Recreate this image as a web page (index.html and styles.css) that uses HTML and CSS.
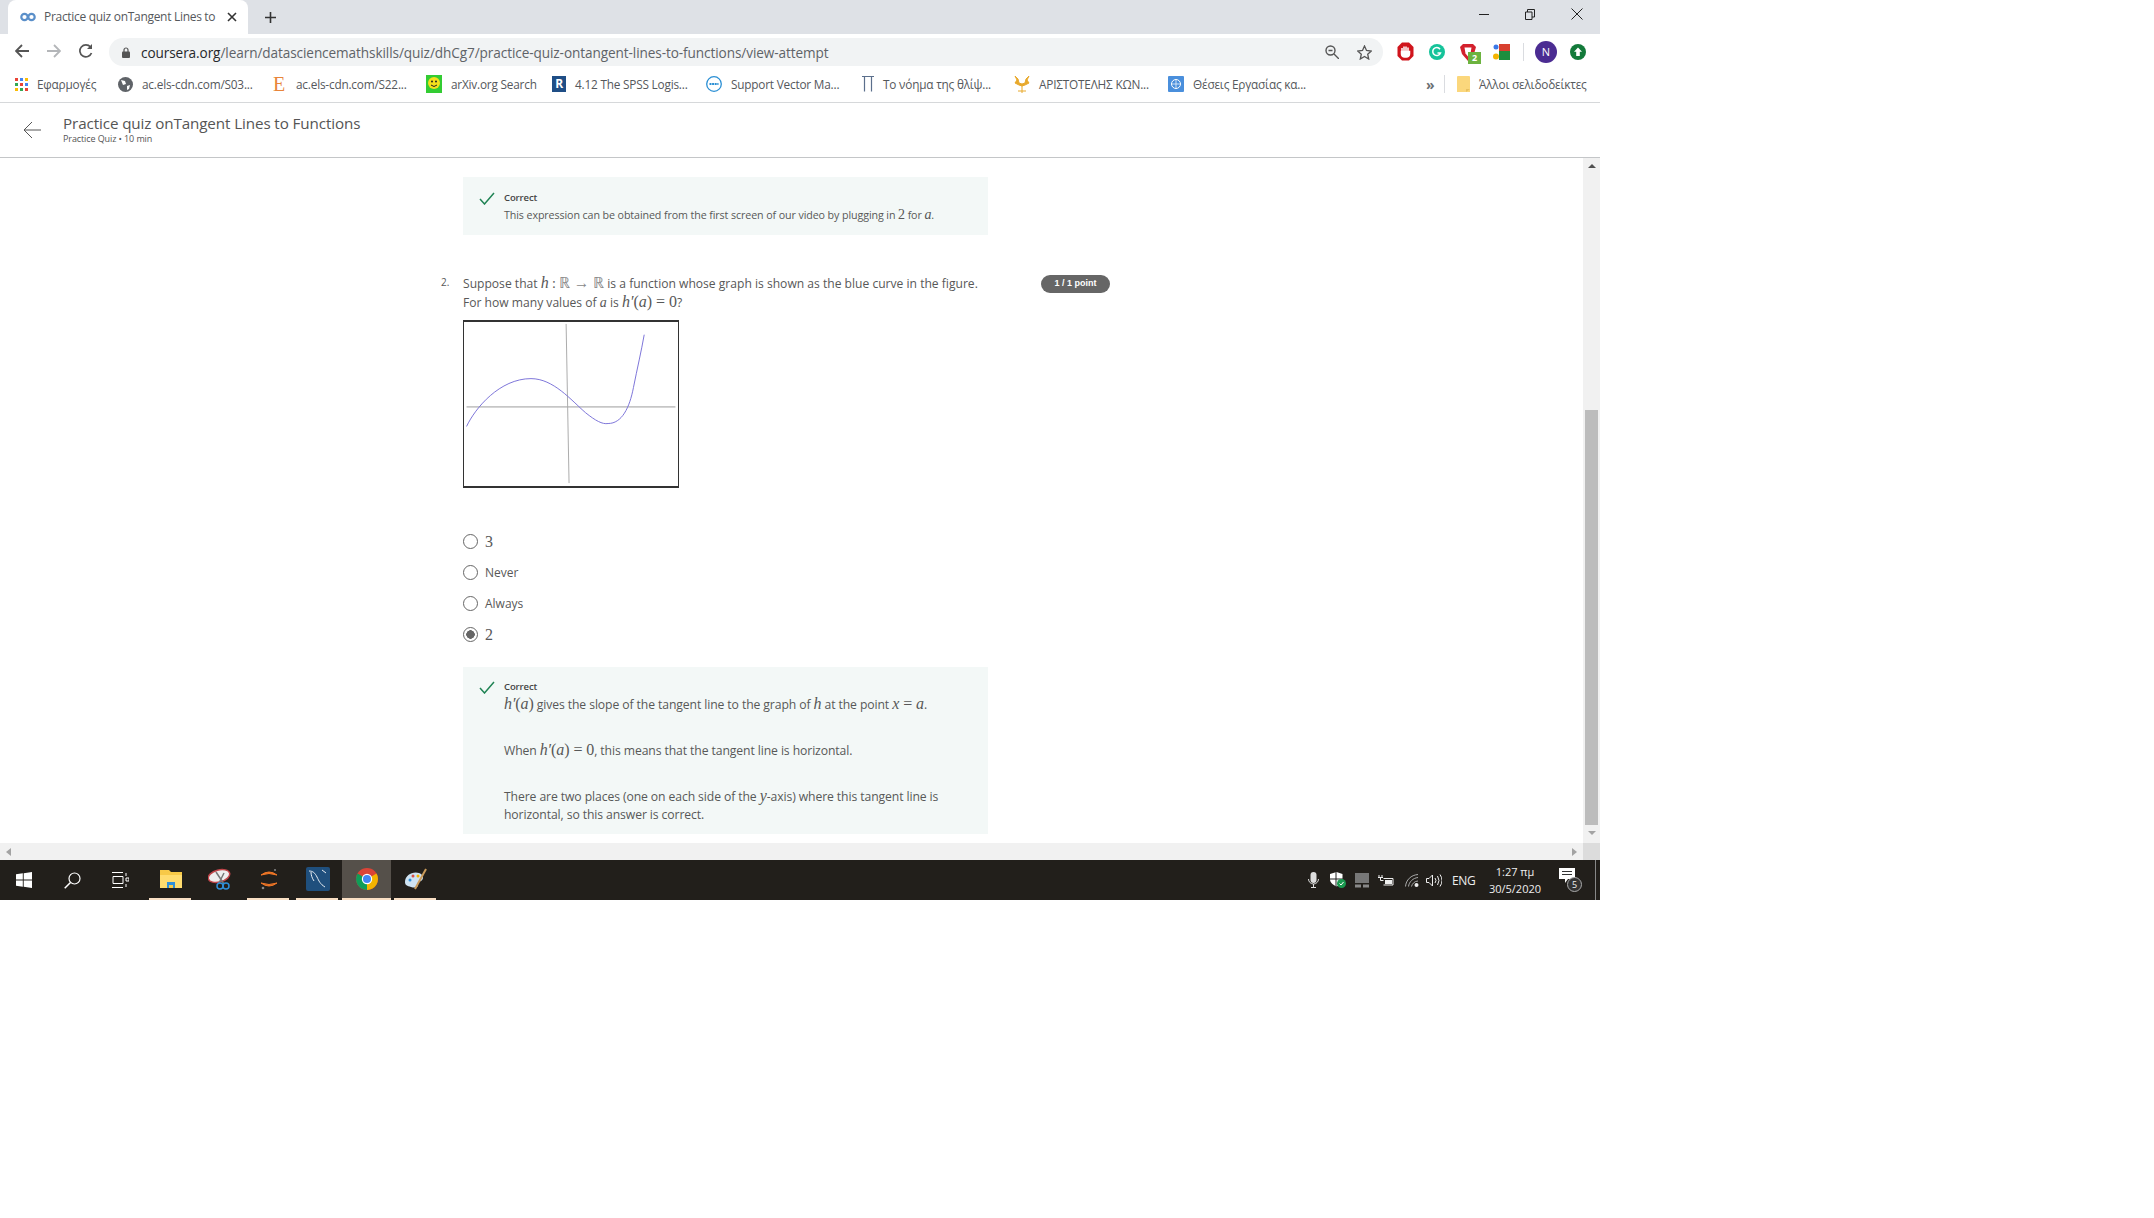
FILE: index.html
```html
<!DOCTYPE html>
<html lang="en">

<head>
    <meta charset="UTF-8">
    <title>Practice quiz onTangent Lines to Functions</title>
    <link rel="stylesheet" href="styles.css">
</head>

<body>
    <div class="window">
        <!-- tab strip -->
        <div class="tab-strip">
            <div class="tab">
                <svg class="tab-icon" width="16" height="10" viewBox="0 0 16 10"><circle cx="4.500" cy="5" r="3.200" fill="none" stroke="#5a8fc9" stroke-width="2.200"/><circle cx="11.500" cy="5" r="3.200" fill="none" stroke="#5a8fc9" stroke-width="2.200"/></svg>
                <span class="tab-title">Practice quiz onTangent Lines to</span>
                <svg width="10" height="10" viewBox="0 0 10 10"><path d="M1 1l8 8M9 1l-8 8" stroke="#333" stroke-width="1.600"/></svg>
            </div>
            <svg class="new-tab" width="11" height="11" viewBox="0 0 11 11"><path d="M5.500 0v11M0 5.500h11" stroke="#333" stroke-width="1.600"/></svg>
            <div class="win-controls">
                <svg width="10" height="10" viewBox="0 0 10 10"><path d="M0 5.500h10" stroke="#222"/></svg>
                <svg width="10" height="11" viewBox="0 0 10 11"><path d="M.5 3h6.500v7.500h-6.500zM2.500 3V.5h7v7.500H7" fill="none" stroke="#222"/></svg>
                <svg width="12" height="12" viewBox="0 0 12 12"><path d="M.5.5l11 11M11.500.5l-11 11" stroke="#222"/></svg>
            </div>
        </div>

        <!-- address bar -->
        <div class="toolbar">
            <div class="nav-buttons">
                <svg width="14" height="14" viewBox="0 0 14 14"><path d="M14 7H1.500M7 1L1 7l6 6" fill="none" stroke="#555" stroke-width="1.800"/></svg>
                <svg width="14" height="14" viewBox="0 0 14 14"><path d="M0 7h12.500M7 1l6 6-6 6" fill="none" stroke="#b4b6b9" stroke-width="1.800"/></svg>
                <svg width="14" height="14" viewBox="0 0 14 14"><path d="M12.500 9A6 6 0 1 1 11.500 3" fill="none" stroke="#555" stroke-width="1.700"/><path d="M13 0v5H8z" fill="#555"/></svg>
            </div>
            <div class="omnibox">
                <svg width="8" height="11" viewBox="0 0 8 11"><path d="M2 5V3a2 2 0 0 1 4 0v2" fill="none" stroke="#555" stroke-width="1.200"/><rect y="4.500" width="8" height="6.500" rx="1" fill="#555"/></svg>
                <span class="url"><b>coursera.org</b>/learn/datasciencemathskills/quiz/dhCg7/practice-quiz-ontangent-lines-to-functions/view-attempt</span>
                <svg class="omni-zoom" width="14" height="14" viewBox="0 0 14 14"><circle cx="5.500" cy="5.500" r="4.500" fill="none" stroke="#555" stroke-width="1.400"/><path d="M9 9l5 5M3.500 5.500h4" stroke="#555" stroke-width="1.400"/></svg>
                <svg width="15" height="15" viewBox="0 0 15 15"><path d="M7.500 1l2 4.500 4.800.5-3.600 3.200 1 4.800-4.200-2.500L3.300 14l1-4.800L.700 6l4.800-.5z" fill="none" stroke="#555" stroke-width="1.300"/></svg>
            </div>
            <div class="extensions">
                <svg width="17" height="19" viewBox="0 0 17 19"><path d="M5 .5h7L16.500 5v9L12 18.500H5L.5 14V5z" fill="#d0141c"/><path d="M4.500 9.500h8v2.500a3 3 0 0 1-3 3h-2a3 3 0 0 1-3-3zM5 10V6M7 10V4.500M9 10V4.500M11 10V5.500" stroke="#fff" stroke-width="1.500" fill="#fff"/></svg>
                <svg width="16" height="16" viewBox="0 0 16 16"><circle cx="8" cy="8" r="8" fill="#15c39a"/><path d="M11 5.200A4 4 0 1 0 11.500 9H8.500" fill="none" stroke="#fff" stroke-width="1.500"/></svg>
                <span class="ext-badge-wrap">
                    <svg width="16" height="18" viewBox="0 0 16 18"><path d="M3 1h10l3 3-2 7-6 7-6-7-2-7z" fill="#d3212d"/><path d="M4.500 4.500h7l-1 6L8 13.500 5.500 10.500z" fill="#fff"/></svg>
                    <span class="ext-badge">2</span>
                </span>
                <svg width="17" height="16" viewBox="0 0 17 16"><rect x="6" width="11" height="7" fill="#d8402f"/><rect x="6" y="7" width="11" height="9" fill="#1e8e3e"/><rect width="6" height="9" fill="#fff"/><circle cx="3" cy="3" r="2.500" fill="#3b78e7"/><circle cx="3" cy="12.500" r="3" fill="#f4b400"/></svg>
                <span class="ext-sep"></span>
                <span class="avatar">N</span>
                <svg width="16" height="16" viewBox="0 0 16 16"><circle cx="8" cy="8" r="8" fill="#137a3a"/><path d="M8 3.500l4 4.200H9.800v4.300H6.200V7.700H4z" fill="#fff"/></svg>
            </div>
        </div>

        <!-- bookmarks -->
        <div class="bookmarks">
            <a class="bookmark bm-apps">
                <svg width="13" height="13" viewBox="0 0 13 13"><path d="M0 0h3v3H0z" fill="#ea4335"/><path d="M5 0h3v3H5z" fill="#4285f4"/><path d="M10 0h3v3h-3z" fill="#fbbc05"/><path d="M0 5h3v3H0z" fill="#34a853"/><path d="M5 5h3v3H5z" fill="#ea4335"/><path d="M10 5h3v3h-3z" fill="#4285f4"/><path d="M0 10h3v3H0z" fill="#fbbc05"/><path d="M5 10h3v3H5z" fill="#34a853"/><path d="M10 10h3v3h-3z" fill="#ea4335"/></svg>
                Εφαρμογές
            </a>
            <a class="bookmark bm-els">
                <svg width="15" height="15" viewBox="0 0 15 15"><circle cx="7.500" cy="7.500" r="7.500" fill="#5f6368"/><path d="M3 3l4 1 1 3-3 1zM9 9l3-1-1 4-2 1z" fill="#fff"/></svg>
                ac.els-cdn.com/S03...
            </a>
            <a class="bookmark bm-els2">
                <span class="icon-e">E</span>
                ac.els-cdn.com/S22...
            </a>
            <a class="bookmark bm-arxiv">
                <svg width="16" height="18" viewBox="0 0 16 18"><rect width="16" height="18" fill="#33cc33"/><circle cx="8" cy="8" r="6" fill="#f4e01c"/><circle cx="6" cy="6.500" r="1" fill="#222"/><circle cx="10" cy="6.500" r="1" fill="#222"/><path d="M5 10q3 3 6 0" fill="none" stroke="#222"/></svg>
                arXiv.org Search
            </a>
            <a class="bookmark bm-spss">
                <span class="icon-r">R</span>
                4.12 The SPSS Logis...
            </a>
            <a class="bookmark bm-dell">
                <svg width="16" height="16" viewBox="0 0 16 16"><circle cx="8" cy="8" r="7.300" fill="#fff" stroke="#2a8fd4" stroke-width="1.300"/><path d="M3.500 8h9" stroke="#2a8fd4" stroke-width="2.200" stroke-dasharray="2 .6"/></svg>
                Support Vector Ma...
            </a>
            <a class="bookmark bm-pi">
                <svg width="12" height="16" viewBox="0 0 12 16"><path d="M0 .5h12M2.500.5v15M9.500.5v15" fill="none" stroke="#5b6f8c" stroke-width="1.200"/></svg>
                Το νόημα της θλίψ...
            </a>
            <a class="bookmark bm-arist">
                <svg width="16" height="17" viewBox="0 0 16 17"><path d="M8 17V9M4 15h8M1 0l2 4-2 3 4 2 3 1 3-1 4-2-2-3 2-4-3 3-1 4-3 1-3-1-1-4z" fill="#e8a92c" stroke="#e8a92c"/></svg>
                ΑΡΙΣΤΟΤΕΛΗΣ ΚΩΝ...
            </a>
            <a class="bookmark bm-un">
                <svg width="16" height="16" viewBox="0 0 16 16"><rect width="16" height="16" rx="1" fill="#4a8fdc"/><circle cx="8" cy="8" r="4.500" fill="none" stroke="#fff"/><path d="M8 3.500v9M3.500 8h9" stroke="#fff" stroke-width=".7"/></svg>
                Θέσεις Εργασίας κα...
            </a>
            <span class="bm-more">»</span>
            <span class="bm-sep"></span>
            <a class="bookmark bm-other">
                <svg width="13" height="16" viewBox="0 0 13 16"><path d="M0 1a1 1 0 0 1 1-1h11a1 1 0 0 1 1 1v15H0z" fill="#fbd77c"/><path d="M9 16v-3h4" fill="#e8c060"/></svg>
                Άλλοι σελιδοδείκτες
            </a>
        </div>

        <!-- page header -->
        <div class="page-header">
            <svg class="back-arrow" width="18" height="18" viewBox="0 0 18 18"><path d="M18 9H1M9 1L1 9l8 8" fill="none" stroke="#555" stroke-width="1"/></svg>
            <div class="page-heading">
                <div class="page-title">Practice quiz onTangent Lines to Functions</div>
                <div class="page-sub">Practice Quiz • 10 min</div>
            </div>
        </div>

        <!-- quiz -->
        <div class="viewport">
            <div class="content">
                <div class="quiz">
                    <div class="feedback feedback-first">
                        <svg class="check" width="16" height="13" viewBox="0 0 16 13"><path d="M1 7l4.500 5L15 1" fill="none" stroke="#1f8354" stroke-width="1.500"/></svg>
                        <div>
                            <div class="feedback-label">Correct</div>
                            <p>This expression can be obtained from the first screen of our video by plugging in <span class="num">2</span> for <i class="math">a</i>.</p>
                        </div>
                    </div>

                    <div class="question">
                        <span class="question-num">2.</span>
                        <div class="question-body">
                            <p>Suppose that <i class="math big">h</i> <span class="num">:</span> <span class="num soft">ℝ → ℝ</span> is a function whose graph is shown as the blue curve in the figure.</p>
                            <p>For how many values of <i class="math">a</i> is <i class="math big">h′</i><span class="num big">(</span><i class="math big">a</i><span class="num big">)</span><span class="num big rel">=</span><span class="num big">0</span>?</p>
                        </div>
                        <span class="points">1 / 1 point</span>
                    </div>

                    <svg class="figure" width="216" height="168" viewBox="0 0 216 168">
                        <path d="M1 87h214" stroke="#999" fill="none"/>
                        <path d="M103 2l3 163" stroke="#aaa" fill="none"/>
                        <path d="M1 107C10 88 35 58 67 58c23 0 41 22 56 35 10 8 17 12 23 11 14 0 22-16 26-37 4-20 8-37 11-54" fill="none" stroke="#7a72d8"/>
                    </svg>

                    <div class="options">
                        <div class="option"><span class="radio"></span><span class="num big">3</span></div>
                        <div class="option"><span class="radio"></span>Never</div>
                        <div class="option"><span class="radio"></span>Always</div>
                        <div class="option"><span class="radio checked"></span><span class="num big">2</span></div>
                    </div>

                    <div class="feedback feedback-second">
                        <svg class="check" width="16" height="13" viewBox="0 0 16 13"><path d="M1 7l4.500 5L15 1" fill="none" stroke="#1f8354" stroke-width="1.500"/></svg>
                        <div>
                            <div class="feedback-label">Correct</div>
                            <p><i class="math big">h′</i><span class="num big">(</span><i class="math big">a</i><span class="num big">)</span> gives the slope of the tangent line to the graph of <i class="math big">h</i> at the point <i class="math big">x</i><span class="num big rel">=</span><i class="math big">a</i>.</p>
                            <p class="para">When <i class="math big">h′</i><span class="num big">(</span><i class="math big">a</i><span class="num big">)</span><span class="num big rel">=</span><span class="num big">0</span>, this means that the tangent line is horizontal.</p>
                            <p class="para">There are two places (one on each side of the <i class="math big">y</i>-axis) where this tangent line is<br>horizontal, so this answer is correct.</p>
                        </div>
                    </div>
                </div>
                <div class="h-scroll">
                    <span class="arrow-left"></span>
                    <span class="arrow-right"></span>
                </div>
            </div>
            <div class="v-scroll">
                <span class="arrow-up"></span>
                <span class="v-thumb"></span>
                <span class="arrow-down"></span>
                <span class="corner"></span>
            </div>
        </div>

        <!-- windows taskbar -->
        <div class="taskbar">
            <div class="task-start">
                <span class="task-btn"><svg width="16" height="16" viewBox="0 0 16 16"><path d="M0 2.300l6.800-1v6.200H0zM7.700 1.200L16 0v7.500H7.700zM0 8.500h6.800v6.200l-6.800-1zM7.700 8.500H16V16l-8.300-1.200z" fill="#fff"/></svg></span>
                <span class="task-btn"><svg width="17" height="17" viewBox="0 0 17 17"><circle cx="10.500" cy="6.500" r="5.500" fill="none" stroke="#fff" stroke-width="1.200"/><path d="M6.500 10.500L.7 16.300" stroke="#fff" stroke-width="1.500"/></svg></span>
                <span class="task-btn"><svg width="17" height="16" viewBox="0 0 17 16"><path d="M0 .5h11M0 15.500h11M1 4.500h10v7H1zM14 1v3M14 6h3v3h-3zM14 12v3" fill="none" stroke="#fff"/></svg></span>
            </div>
            <div class="task-apps">
                <span class="task-app running"><svg width="22" height="18" viewBox="0 0 22 18"><path d="M0 0h9l2 2h11v16H0z" fill="#f7c948"/><path d="M0 5h22v13H0z" fill="#ffdc6f"/><path d="M7 18v-6h8v6" fill="#2f8fd8"/><path d="M9 18v-3h4v3" fill="#f7c948"/></svg></span>
                <span class="task-app"><svg width="24" height="22" viewBox="0 0 24 22"><ellipse cx="11" cy="8" rx="11" ry="6" transform="rotate(-15 11 8)" fill="#eee" stroke="#c0454a" stroke-width="1.500"/><path d="M8 4l8 12M16 5L11 15" stroke="#777" stroke-width="1.500"/><circle cx="18" cy="18" r="3" fill="none" stroke="#2f8fd8" stroke-width="1.500"/><circle cx="12" cy="18" r="3" fill="none" stroke="#2f8fd8" stroke-width="1.500"/></svg></span>
                <span class="task-app running"><svg width="18" height="22" viewBox="0 0 18 22"><path d="M1 7q8-6 16 0q-8-3-16 0zM1 15q8 6 16 0q-8 3-16 0z" fill="#f37726" stroke="#f37726"/><circle cx="15" cy="2" r="1" fill="#888"/><circle cx="3" cy="20" r="1.300" fill="#888"/></svg></span>
                <span class="task-app running"><svg width="24" height="24" viewBox="0 0 24 24"><rect width="24" height="24" rx="2" fill="#1f4f7d"/><path d="M3 4c4 0 6 2 8 6s3 7 8 10M5 5c0 3 1 6 3 9M16 3l4 3" fill="none" stroke="#e8eef4"/></svg></span>
                <span class="task-app active running"><svg width="22" height="22" viewBox="0 0 22 22"><circle cx="11" cy="11" r="11" fill="#db4437"/><path d="M11 11L1.500 5.500A11 11 0 0 0 11 22z" fill="#0f9d58"/><path d="M11 11v11A11 11 0 0 0 20.500 5.500z" fill="#f4b400"/><circle cx="11" cy="11" r="5.200" fill="#fff"/><circle cx="11" cy="11" r="4" fill="#4285f4"/></svg></span>
                <span class="task-app running"><svg width="24" height="24" viewBox="0 0 24 24"><path d="M1 15c0-7 8-11 14-9 5 2 5 6 2 8-3 1-4 2-3 4 0 3-4 3-7 2-4-1-6-2-6-5z" fill="#cfe3f2"/><circle cx="6" cy="13" r="1.500" fill="#2f8fd8"/><circle cx="9" cy="9" r="1.500" fill="#d8504a"/><circle cx="14" cy="9" r="1.500" fill="#f4b400"/><path d="M11 22L22 2" stroke="#c99a5a" stroke-width="2"/></svg></span>
            </div>
            <div class="tray">
                <svg class="tray-mic" width="11" height="16" viewBox="0 0 11 16"><rect x="2.500" width="6" height="11" rx="3" fill="#ddd"/><path d="M.5 7a5 5 0 0 0 10 0M5.500 12v4M3 15.500h5" fill="none" stroke="#ddd"/></svg>
                <svg class="tray-shield" width="16" height="16" viewBox="0 0 16 16"><path d="M6.500 0l6 2v5c0 4-3 6-6 7.500C3.500 13 0 11 0 7V2z" fill="#fff"/><path d="M6 0v15M0 7h13" stroke="#222"/><circle cx="11.500" cy="11.500" r="4.500" fill="#1a9a50"/><path d="M9.500 11.500l1.500 1.500 2.500-3" fill="none" stroke="#fff"/></svg>
                <svg class="tray-device" width="14" height="15" viewBox="0 0 14 15"><rect width="14" height="10" fill="#777"/><rect y="11.500" width="6" height="3" fill="#888"/><rect x="8" y="11.500" width="6" height="3" fill="#888"/></svg>
                <svg class="tray-battery" width="16" height="11" viewBox="0 0 16 11"><path d="M1 0v2M4 0v2M0 2.500h5M2.500 2.500v3h3M5.500 3.500h9.500v6.500H5.500" fill="none" stroke="#eee"/><rect x="7" y="5" width="7" height="4" fill="#eee"/></svg>
                <svg class="tray-wifi" width="14" height="13" viewBox="0 0 14 13"><path d="M.5 12.500C1 6 6 1 13 .5M3.500 12.500C4 8 8 4 13 3.500M6.500 12.500C7 10 9.500 7 13 7" fill="none" stroke="#aaa"/><circle cx="11.500" cy="11" r="2" fill="#eee"/></svg>
                <svg class="tray-sound" width="16" height="13" viewBox="0 0 16 13"><path d="M.5 4.500h2.500L6.500 1v11L3 8.500H.5z" fill="none" stroke="#eee"/><path d="M9 4q2 2.500 0 5M11.500 2q3 4.500 0 9M14 .5q4 6 0 12" fill="none" stroke="#eee"/></svg>
                <span class="tray-lang">ENG</span>
                <div class="tray-clock">
                    <span>1:27 πμ</span>
                    <span>30/5/2020</span>
                </div>
                <span class="tray-notify">
                    <svg width="16" height="15" viewBox="0 0 16 15"><path d="M0 0h16v11H9l-3 4v-4H0z" fill="#fff"/><path d="M3 3.500h10M3 6.500h10" stroke="#333"/></svg>
                    <span class="notify-count">5</span>
                </span>
                <span class="show-desktop"></span>
            </div>
        </div>
    </div>
</body>

</html>
```

FILE: styles.css
```css
* {
    box-sizing: border-box;
}

body {
    margin: 0;
    background-color: #fff;
    color: #3c4043;
    font-family: "Open Sans", Arial, sans-serif;
}

p {
    margin: 0;
}

svg {
    display: block;
    flex-shrink: 0;
}

.window {
    width: 1600px;
    height: 900px;
    display: flex;
    flex-direction: column;
}

/* chrome */
.tab-strip {
    height: 34px;
    background-color: #dee1e6;
    display: flex;
    align-items: center;
    padding-left: 8px;
}

.tab {
    width: 240px;
    height: 34px;
    background-color: #fff;
    border-radius: 8px 8px 0 0;
    display: flex;
    align-items: center;
    padding-left: 12px;
    font-size: 12px;
}

.tab-title {
    width: 183px;
    margin-left: 8px;
    margin-top: -1px;
    white-space: nowrap;
    overflow: hidden;
    color: #55585c;
    letter-spacing: -0.3px;
}

.new-tab {
    margin-left: 17px;
}

.win-controls {
    margin-left: auto;
    display: flex;
    align-items: center;
    gap: 36px;
    padding-right: 17px;
    margin-top: -6px;
}

.toolbar {
    height: 34px;
    display: flex;
    align-items: center;
    background-color: #fff;
    padding-left: 15px;
}

.nav-buttons {
    display: flex;
    align-items: center;
    gap: 18px;
    width: 94px;
}

.omnibox {
    width: 1274px;
    height: 28px;
    margin-top: 2px;
    border-radius: 14px;
    background-color: #f1f3f4;
    display: flex;
    align-items: center;
    padding: 0 11px 0 13px;
    gap: 18px;
}

.url {
    font-size: 13.600px;
    color: #5f6368;
    white-space: nowrap;
    margin-left: -7px;
    letter-spacing: -0.09px;
}

.url b {
    font-weight: 400;
    color: #26282b;
}

.omni-zoom {
    margin-left: auto;
}

.extensions {
    display: flex;
    align-items: center;
    padding-left: 14px;
    margin-top: 1px;
}

.extensions > svg:nth-child(2) {
    margin: 0 15px 0 15px;
}

.ext-badge-wrap {
    position: relative;
    width: 16px;
    height: 18px;
    margin-right: 17px;
}

.ext-badge {
    position: absolute;
    left: 8px;
    top: 9px;
    width: 13px;
    height: 12px;
    background-color: #6cb33f;
    color: #fff;
    font-size: 9px;
    font-weight: 700;
    line-height: 12px;
    text-align: center;
}

.ext-sep {
    width: 1px;
    height: 18px;
    background-color: #dadce0;
    margin: 0 11px 0 13px;
}

.avatar {
    width: 22px;
    height: 22px;
    border-radius: 50%;
    background-color: #4b2c92;
    color: #fff;
    font-size: 11px;
    line-height: 22px;
    text-align: center;
    margin-right: 13px;
}

.bookmarks {
    height: 35px;
    border-bottom: 1px solid #d6d8da;
    display: flex;
    align-items: center;
    padding: 0 0 2px 15px;
    font-size: 11.800px;
    color: #55585c;
    background-color: #fff;
}

.bookmark {
    display: flex;
    align-items: center;
    gap: 9px;
    white-space: nowrap;
    letter-spacing: -0.2px;
}

.bm-apps { width: 103px; }
.bm-els { width: 155px; }
.bm-els2 { width: 153px; }
.bm-arxiv { width: 126px; }
.bm-spss { width: 154px; }
.bm-dell { width: 156px; }
.bm-pi { width: 152px; }
.bm-arist { width: 154px; }
.bm-un { width: 258px; }

.icon-e {
    width: 14px;
    color: #e8853a;
    font-family: "Liberation Serif", serif;
    font-size: 20px;
    line-height: 18px;
}

.icon-r {
    width: 14px;
    height: 16px;
    background-color: #1f4e86;
    color: #fff;
    font-size: 12px;
    font-weight: 700;
    line-height: 16px;
    text-align: center;
}

.bm-more {
    width: 18px;
    font-size: 14px;
    font-weight: 700;
    color: #6b6f73;
}

.bm-sep {
    width: 1px;
    height: 18px;
    background-color: #dadce0;
    margin-right: 12px;
}

/* coursera header */
.page-header {
    height: 55px;
    border-bottom: 1px solid #c4c6c8;
    display: flex;
    align-items: center;
    padding-left: 23px;
    gap: 22px;
}

.page-heading {
    margin-top: -4px;
}

.page-title {
    font-size: 15.200px;
    line-height: 20px;
    color: #555;
    letter-spacing: -0.1px;
}

.page-sub {
    font-size: 9px;
    line-height: 11px;
    color: #555;
    letter-spacing: -0.1px;
}

/* quiz */
.viewport {
    height: 702px;
    display: flex;
}

.content {
    flex: 1;
    display: flex;
    flex-direction: column;
}

.quiz {
    flex: 1;
    padding: 19px 0 0 463px;
    font-size: 12.100px;
    line-height: 18px;
    color: #585858;
}

.feedback {
    width: 525px;
    background-color: #f3f8f7;
    display: flex;
    gap: 9px;
    padding-left: 16px;
    letter-spacing: -0.1px;
}

.feedback-first {
    height: 58px;
    padding-top: 13px;
    font-size: 10.700px;
}

.feedback-second {
    height: 167px;
    padding-top: 12px;
    margin-top: 17px;
    font-size: 12.200px;
}

.check {
    margin-top: 2px;
}

.feedback-label {
    font-size: 9.500px;
    line-height: 16px;
    font-weight: 600;
    color: #444;
}

.para {
    margin-top: 27px;
}

.num {
    font-family: "Liberation Serif", serif;
    font-size: 14px;
}

.soft {
    color: #888;
    font-size: 15.500px;
}

.math {
    font-family: "Liberation Serif", serif;
    font-size: 14px;
}

.big {
    font-size: 16px;
}

.rel {
    margin: 0 4px;
}

.question {
    display: flex;
    margin: 39px 0 0 -22px;
}

.question-num {
    width: 22px;
    font-size: 10px;
    line-height: 16px;
}

.question-body {
    width: 556px;
}

.points {
    width: 69px;
    height: 18px;
    margin-left: 22px;
    margin-top: 1px;
    border-radius: 9px;
    background-color: #666;
    color: #fff;
    font-family: "Liberation Sans", Arial, sans-serif;
    font-size: 9px;
    font-weight: 700;
    line-height: 17px;
    text-align: center;
}

.figure {
    margin-top: 8px;
    background-color: #fff;
    border: solid #333;
    border-width: 2px 1px;
}

.options {
    margin-top: 38px;
}

.option {
    height: 31px;
    display: flex;
    align-items: center;
    gap: 7px;
    font-size: 12px;
}

.radio {
    width: 15px;
    height: 15px;
    border: 1.500px solid #666;
    border-radius: 50%;
    background-color: #fff;
}

.radio.checked {
    background: radial-gradient(circle, #666 0 4px, #fff 4.500px);
}

.h-scroll {
    height: 17px;
    background-color: #f1f1f1;
    display: flex;
    align-items: center;
    justify-content: space-between;
    padding: 0 6px;
}

.arrow-left {
    border: solid transparent;
    border-width: 4px 5px 4px 0;
    border-right-color: #a3a3a3;
}

.arrow-right {
    border: solid transparent;
    border-width: 4px 0 4px 5px;
    border-left-color: #a3a3a3;
}

.v-scroll {
    width: 17px;
    background-color: #f1f1f1;
    display: flex;
    flex-direction: column;
    align-items: center;
}

.arrow-up {
    margin-top: 6px;
    border: solid transparent;
    border-width: 0 4px 4px;
    border-bottom-color: #505050;
}

.v-thumb {
    width: 13px;
    height: 415px;
    margin-top: 242px;
    background-color: #bcbcbc;
}

.arrow-down {
    margin-top: 6px;
    border: solid transparent;
    border-width: 4px 4px 0;
    border-top-color: #a3a3a3;
}

.corner {
    width: 17px;
    height: 17px;
    margin-top: auto;
    background-color: #dcdcdc;
}

/* taskbar */
.taskbar {
    height: 40px;
    background-color: #221f1b;
    display: flex;
    align-items: stretch;
    color: #eee;
}

.task-start {
    display: flex;
}

.task-btn {
    width: 48px;
    display: flex;
    align-items: center;
    justify-content: center;
}

.task-apps {
    display: flex;
    margin-left: 2px;
}

.task-app {
    width: 49px;
    display: flex;
    align-items: center;
    justify-content: center;
    border-bottom: 2px solid transparent;
}

.task-app.running {
    border-image: linear-gradient(90deg, transparent 4px, #f9dfc4 4px, #f9dfc4 44px, transparent 44px) 1;
}

.task-app.active {
    background-color: #55504a;
    border-image: none;
    border-bottom-color: #f9dfc4;
}

.tray {
    margin-left: auto;
    display: flex;
    align-items: center;
    font-size: 12px;
}

.tray-mic { margin-right: 11px; }
.tray-shield { margin-right: 9px; }
.tray-device { margin-right: 9px; }
.tray-battery { margin-right: 11px; }
.tray-wifi { margin-right: 7px; }
.tray-sound { margin-right: 10px; }

.tray-lang {
    width: 24px;
    margin-right: 8px;
    letter-spacing: -0.3px;
}

.tray-clock {
    width: 62px;
    display: flex;
    flex-direction: column;
    align-items: center;
    font-size: 11px;
    line-height: 17px;
}

.tray-notify {
    position: relative;
    width: 23px;
    height: 24px;
    margin-left: 13px;
}

.notify-count {
    position: absolute;
    right: 0;
    bottom: 0;
    width: 15px;
    height: 15px;
    border: 1px solid #aaa;
    border-radius: 50%;
    background-color: #333;
    font-size: 9px;
    line-height: 13px;
    text-align: center;
}

.show-desktop {
    width: 1px;
    height: 40px;
    margin: 0 4px 0 13px;
    background-color: #888;
}
```
